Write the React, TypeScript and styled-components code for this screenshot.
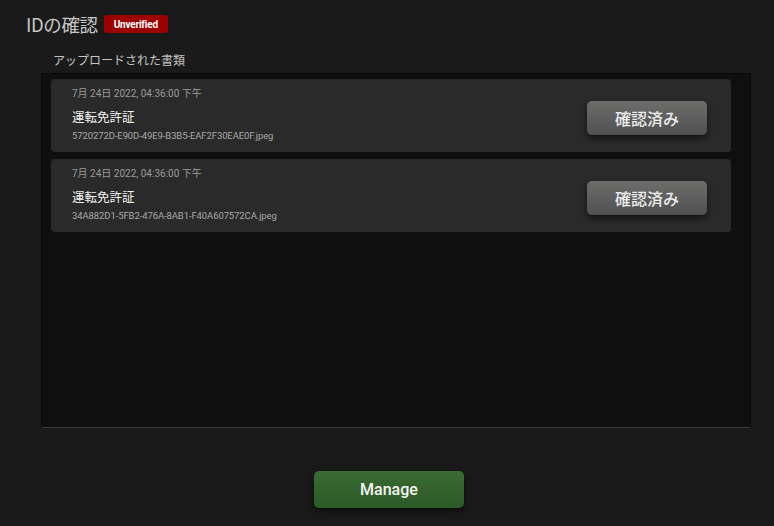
import React from "react";
import styled, { createGlobalStyle } from "styled-components";

const Global = createGlobalStyle`
  html, body { margin: 0; padding: 0; background: #1a1a1a; }
  body { font-family: Roboto, "Noto Sans CJK JP", sans-serif; }
`;

const Page = styled.div`
  width: 774px;
  height: 526px;
  box-sizing: border-box;
  padding: 12px 0 0 0;
  display: flex;
  flex-direction: column;
`;

const Header = styled.div`
  display: flex;
  align-items: center;
  gap: 6px;
  padding-left: 26px;
  height: 24px;
`;

const Title = styled.h1`
  margin: 0;
  font-family: "Noto Sans CJK JP", sans-serif;
  font-weight: 400;
  font-size: 18.5px;
  line-height: 24px;
  color: #c6c6c6;
  letter-spacing: -0.4px;
`;

const Badge = styled.span`
  display: inline-flex;
  align-items: center;
  justify-content: center;
  height: 18px;
  padding: 0 10px;
  border-radius: 3px;
  background: #9c0000;
  color: #fff;
  font-family: Roboto, sans-serif;
  font-weight: 700;
  font-size: 10px;
  letter-spacing: -0.2px;
`;

const SectionLabel = styled.div`
  margin: 16px 0 0 53px;
  font-family: "Noto Sans CJK JP", sans-serif;
  font-size: 12px;
  line-height: 16px;
  color: #c4c4c4;
`;

const Panel = styled.div`
  margin: 5px 0 0 41px;
  width: 710px;
  height: 355px;
  box-sizing: border-box;
  background: #0f0f0f;
  border: 1px solid #080808;
  border-bottom: 1px solid #3a3a3a;
  border-radius: 2px;
  padding: 5px 19px 0 9px;
  display: flex;
  flex-direction: column;
  gap: 7px;
`;

const Card = styled.div`
  height: 73px;
  box-sizing: border-box;
  background: #2a2a2a;
  border-radius: 4px;
  padding: 0 24px 0 21px;
  display: flex;
  align-items: center;
  justify-content: space-between;
`;

const Info = styled.div`
  display: flex;
  flex-direction: column;
`;

const DateLine = styled.div`
  font-family: Roboto, "Noto Sans CJK JP", sans-serif;
  font-size: 10px;
  line-height: 14px;
  color: #9a9a9a;
  margin-top: -2px;
`;

const DocName = styled.div`
  font-family: "Noto Sans CJK JP", sans-serif;
  font-size: 12.5px;
  line-height: 16px;
  color: #f2f2f2;
  margin-top: 8px;
`;

const FileName = styled.div`
  font-family: Roboto, sans-serif;
  font-size: 9.5px;
  line-height: 12px;
  color: #a8a8a8;
  margin-top: 5px;
  letter-spacing: -0.1px;
`;

const VerifyButton = styled.button`
  width: 120px;
  height: 34px;
  border: none;
  border-radius: 5px;
  background: linear-gradient(#6d6e6c, #4f504f);
  box-shadow: 0 3px 6px rgba(0, 0, 0, 0.6);
  color: #ececec;
  font-family: "Noto Sans CJK JP", sans-serif;
  font-size: 16px;
  font-weight: 500;
  margin-top: 5px;
  cursor: pointer;
`;

const Footer = styled.div`
  display: flex;
  justify-content: center;
  margin-top: 43px;
  padding-left: 4px;
`;

const ManageButton = styled.button`
  width: 150px;
  height: 37px;
  border: none;
  border-radius: 5px;
  background: linear-gradient(#3a6b33, #2c5a27);
  box-shadow: 0 3px 6px rgba(0, 0, 0, 0.6);
  color: #f4f4f4;
  font-family: Roboto, sans-serif;
  font-weight: 500;
  font-size: 16px;
  cursor: pointer;
`;

const docs = [
  { date: "7月 24日 2022, 04:36:00 下午", name: "運転免許証", file: "5720272D-E90D-49E9-B3B5-EAF2F30EAE0F.jpeg" },
  { date: "7月 24日 2022, 04:36:00 下午", name: "運転免許証", file: "34A882D1-5FB2-476A-8AB1-F40A607572CA.jpeg" },
];

export default function App() {
  return (
    <>
      <Global />
      <Page>
        <Header>
          <Title>IDの確認</Title>
          <Badge>Unverified</Badge>
        </Header>
        <SectionLabel>アップロードされた書類</SectionLabel>
        <Panel>
          {docs.map((d) => (
            <Card key={d.file}>
              <Info>
                <DateLine>{d.date}</DateLine>
                <DocName>{d.name}</DocName>
                <FileName>{d.file}</FileName>
              </Info>
              <VerifyButton>確認済み</VerifyButton>
            </Card>
          ))}
        </Panel>
        <Footer>
          <ManageButton>Manage</ManageButton>
        </Footer>
      </Page>
    </>
  );
}
